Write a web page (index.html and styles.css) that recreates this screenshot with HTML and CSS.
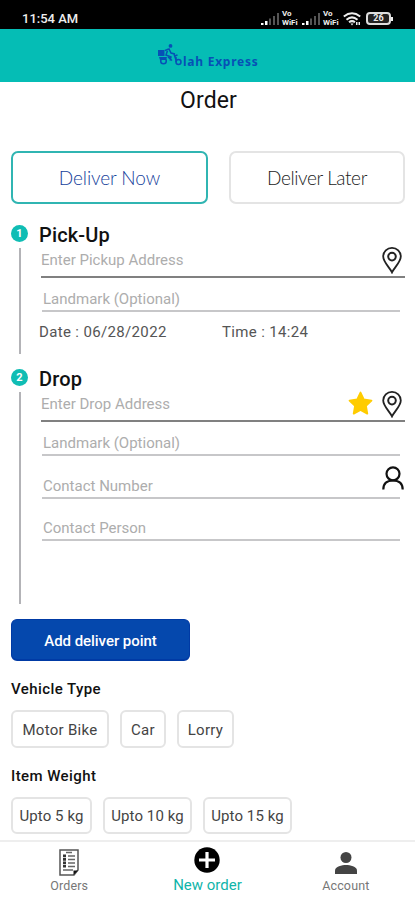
FILE: index.html
```html
<!DOCTYPE html>
<html lang="en">
<head>
<meta charset="utf-8">
<title>Order</title>
<link rel="stylesheet" href="styles.css">
</head>
<body>
<svg class="defs" width="0" height="0">
  <symbol id="pin" viewBox="0 0 20 27"><path d="M10 25.4C8 21 1.2 15 1.2 9.5a8.800 8.600 0 0 1 17.600 0C18.800 15 12 21 10 25.400Z" fill="none" stroke="#222" stroke-width="1.800"/><circle cx="10" cy="9.600" r="3.800" fill="none" stroke="#222" stroke-width="2"/></symbol>
  <symbol id="signal" viewBox="0 0 19 13"><path d="M0 12v-2h2.500v2zM4 12V8h2.500v4z" fill="#fff"/><path d="M8 12V5.500h2V12zM12 12V3h2v9zM16 12V0h2v12z" fill="#555"/></symbol>
</svg>
<header class="status">
  <span class="clock">11:54 AM</span>
  <div class="indicators">
    <svg class="signal"><use href="#signal"/></svg>
    <span class="vo">Vo<br>WiFi</span>
    <svg class="signal"><use href="#signal"/></svg>
    <span class="vo">Vo<br>WiFi</span>
    <svg class="wifi" viewBox="0 0 18 14"><g fill="none" stroke="#eee" stroke-width="2"><path d="M.8 4.500Q9-2 17.200 4.500M3.500 7.700Q9 3 14.500 7.700M6 10.300Q9 8 12 10.300"/></g><path d="M7.500 11.500h3L9 13.500zM13 10h1.500v3H13zM15.500 10H17v3h-1.500z" fill="#eee"/></svg>
    <span class="battery">26</span>
  </div>
</header>
<div class="brand">
  <svg class="rider" viewBox="0 0 25 23"><g fill="#0750b6"><path d="M0 6h6.500v6H0zM1 13h8l-1 3H2z"/><circle cx="12.500" cy="1.900" r="1.900"/></g><g fill="none" stroke="#0750b6" stroke-width="1.500"><path d="M7 6.500l4-1.500 2 4 4 1M10 5l-2 6 5 2-1 3.500M10 13l4 3.500M16 10l2 6M16.500 12l3-1"/><circle cx="5.500" cy="17" r="2.800"/><circle cx="20.500" cy="18" r="2.500"/><path d="M18 18v-5"/></g></svg>
  <span class="brand-name">lah Express</span>
</div>
<main>
  <h1>Order</h1>
  <div class="modes">
    <button class="mode active">Deliver Now</button>
    <button class="mode later">Deliver Later</button>
  </div>
  <section class="stop pickup">
    <div class="rail"><span class="step">1</span><i class="track"></i></div>
    <div class="details">
      <h2>Pick-Up</h2>
      <div class="field main-field"><span>Enter Pickup Address</span><svg class="pin"><use href="#pin"/></svg></div>
      <div class="field landmark"><span>Landmark (Optional)</span></div>
      <div class="when"><span class="date">Date : 06/28/2022</span><span class="time">Time : 14:24</span></div>
    </div>
  </section>
  <section class="stop drop">
    <div class="rail"><span class="step">2</span><i class="track"></i></div>
    <div class="details">
      <h2>Drop</h2>
      <div class="field main-field"><span>Enter Drop Address</span><svg class="star" viewBox="0 0 24 24"><path d="M12 1.500l3.200 6.700 7.300 1-5.300 5.100 1.300 7.400L12 18.200l-6.500 3.500 1.300-7.400L1.500 9.200l7.300-1z" fill="#fc0" stroke="#fc0" stroke-width="1.800" stroke-linejoin="round"/></svg><svg class="pin"><use href="#pin"/></svg></div>
      <div class="field landmark"><span>Landmark (Optional)</span></div>
      <div class="field contact"><span>Contact Number</span><svg class="person" viewBox="0 0 22 24"><g fill="none" stroke="#111" stroke-width="2.200"><circle cx="11" cy="7.800" r="6.500"/><path d="M1.300 23.500C1.300 17.500 5 14.500 11 14.500s9.700 3 9.700 9"/></g></svg></div>
      <div class="field contact"><span>Contact Person</span></div>
    </div>
  </section>
  <button class="add">Add deliver point</button>
  <h3>Vehicle Type</h3>
  <div class="chips vehicles"><button class="bike">Motor Bike</button><button class="car">Car</button><button class="lorry">Lorry</button></div>
  <h3>Item Weight</h3>
  <div class="chips weights"><button class="w5">Upto 5 kg</button><button class="w10">Upto 10 kg</button><button class="w15">Upto 15 kg</button></div>
</main>
<nav>
  <a class="tab"><svg class="doc" viewBox="0 0 20 27"><path d="M1 1h18v20l-4 5H1z" fill="#fff" stroke="#555" stroke-width="1.500"/><path d="M14.500 26v-4.500H19z" fill="#111"/><path d="M7 3.500h6M9 7h7M9 10.500h7M9 14h7M9 17.500h7M4 21h10" stroke="#666" stroke-width="1.300"/><path d="M5.500 5.500v13" stroke="#333" stroke-width="3" stroke-dasharray="2.700 .8"/></svg><span>Orders</span></a>
  <a class="tab current"><svg class="plus" viewBox="0 0 26 26"><circle cx="13" cy="13" r="12.700"/><path d="M13 5v16M5 13h16" stroke="#fff" stroke-width="3.200"/></svg><span>New order</span></a>
  <a class="tab"><svg class="account" viewBox="0 0 22 22"><path d="M0 22v-3.500C0 14.500 7 13 11 13s11 1.500 11 5.500V22z" fill="#444"/><circle cx="11" cy="5.500" r="5.500" fill="#444"/></svg><span>Account</span></a>
</nav>
</body>
</html>
```

FILE: styles.css
```css
* { box-sizing: border-box; }
body { margin: 0; width: 415px; height: 900px; overflow: hidden; display: flex; flex-direction: column; background: #fff; color: #111; font-family: Roboto, "Liberation Sans", sans-serif; }
button { font: inherit; color: inherit; background: #fff; margin: 0; padding: 0; white-space: nowrap; }
svg { display: block; flex: none; }
.defs { display: none; }
.status { height: 29px; flex: none; background: #000; color: #eee; display: flex; justify-content: space-between; padding: 9px 19px 0 22px; }
.clock { font-size: 13px; line-height: 20px; font-weight: 500; }
.indicators { display: flex; align-items: flex-start; }
.signal { width: 19px; height: 13px; margin: 4px 2px 0 1px; }
.vo { width: 19px; font-size: 8px; line-height: 9px; font-weight: 700; white-space: nowrap; }
.wifi { width: 18px; height: 14px; margin: 3px 5px 0 1px; }
.battery { width: 25px; height: 13px; margin-top: 3px; margin-right: 5px; border: 2px solid #ddd; border-radius: 4px; background: #222; font-size: 9px; line-height: 9px; text-align: center; font-weight: 700; position: relative; }
.battery::after { content: ""; position: absolute; right: -4px; top: 3px; width: 2px; height: 4px; background: #eee; }
.brand { height: 53px; flex: none; background: #05bdb5; display: flex; padding: 15px 0 0 158px; }
.rider { width: 25px; height: 23px; }
.brand-name { padding-top: 10px; font: 700 12px/16px "Noto Sans", sans-serif; color: #0750b6; letter-spacing: .75px; white-space: nowrap; }
main { height: 758px; flex: none; padding: 0 10px 0 11px; }
h1 { margin: 0; padding: 5px 0 0 1px; height: 69px; font-size: 23px; line-height: 28px; font-weight: 400; text-align: center; letter-spacing: .1px; }
.modes { display: flex; gap: 21px; height: 53px; }
.mode { width: 197px; border: 2px solid #30b5b2; border-radius: 7px; font: 300 19px/1 Lato, sans-serif; color: #16429b; letter-spacing: -.1px; }
.mode.later { width: 176px; border-color: #e4e4e4; color: #222; letter-spacing: -.4px; }
.stop { display: flex; }
.pickup { height: 144px; margin-top: 16px; }
.drop { height: 255px; }
.rail { width: 17px; margin-right: 13px; padding-top: 5px; display: flex; flex-direction: column; align-items: center; }
.step { width: 17px; height: 17px; border-radius: 50%; background: #10bdb4; color: #fff; font-size: 11px; line-height: 17px; font-weight: 700; text-align: center; flex: none; }
.track { width: 2px; height: 106px; margin-top: 6px; background: #b3b3b7; flex: none; }
.drop .track { height: 212px; }
.details { width: 364px; }
h2 { margin: 0 0 0 -2px; padding-top: 2px; height: 26px; font-size: 20px; line-height: 26px; font-weight: 500; letter-spacing: .15px; }
.field { display: flex; justify-content: space-between; border-bottom: 2px solid #c7c7c9; color: #adadad; font-size: 15px; letter-spacing: 0; }
.main-field { height: 32px; border-bottom-color: #808080; padding: 0 3px 0 0; line-height: 29px; }
.main-field span { flex: 1; }
.pin { width: 20px; height: 27px; margin-top: 1px; }
.star { width: 25px; height: 25px; margin: 1px 9px 0 0; }
.landmark { width: 358px; height: 34px; margin-left: 1px; padding: 8px 0 0 1px; line-height: 26px; }
.contact { width: 358px; height: 42.500px; margin-left: 1px; padding: 16.500px 0 0 1px; line-height: 26px; }
.person { width: 22px; height: 24px; margin: -7px -4px 0 0; }
.when { display: flex; padding-top: 6px; color: #555; font-size: 15px; line-height: 28px; }
.date { width: 183px; margin-left: -2px; letter-spacing: .35px; }
.time { letter-spacing: .35px; }
.add { display: block; width: 179px; height: 42px; padding-top: 2px; border: 1px solid #003aa5; border-bottom-width: 2px; border-radius: 6px; background: #0548ad; color: #fff; font-size: 15px; font-weight: 500; letter-spacing: -.05px; }
h3 { margin: 0; height: 49px; padding-top: 18px; font-size: 15px; line-height: 20px; font-weight: 500; letter-spacing: .42px; }
.chips { display: flex; height: 38px; }
.chips button { border: 2px solid #e4e4e4; border-radius: 6px; color: #444; font-size: 15px; letter-spacing: .3px; padding-top: 1px; }
.vehicles { gap: 11px; }
.weights { gap: 11px; height: 37px; }
.bike { width: 98px; } .car { width: 46px; } .lorry { width: 57px; }
.weights button { letter-spacing: .1px; }
.w5 { width: 81px; } .w10 { width: 89px; } .w15 { width: 89px; }
nav { height: 60px; flex: none; border-top: 2px solid #eee; background: #fff; display: grid; grid-template-columns: repeat(3, 1fr); }
.tab { display: flex; flex-direction: column; align-items: center; color: #777; font-size: 12.500px; letter-spacing: .15px; }
.tab span { line-height: 18px; }
.doc { width: 20px; height: 27px; margin: 7px 0 1px; }
.plus { width: 26px; height: 26px; margin: 5px 0 3px; }
.account { width: 22px; height: 22px; margin: 10px 0 3px; }
.current { color: #10b5aa; font-size: 15px; letter-spacing: 0; }
```
